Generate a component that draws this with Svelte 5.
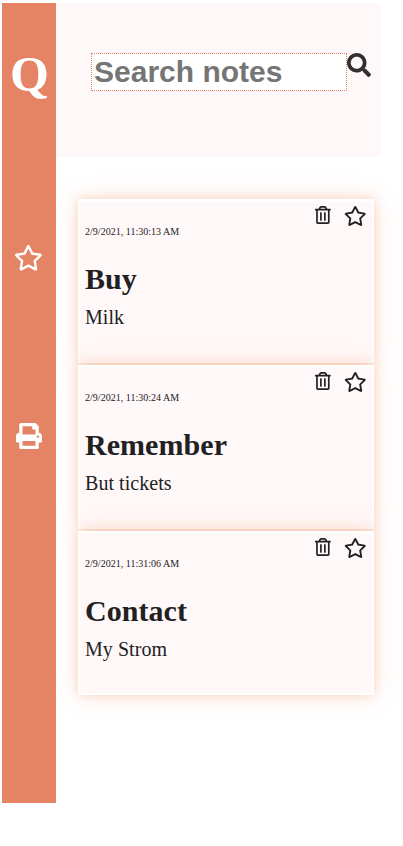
<script>
  const notes = [
    { date: '2/9/2021, 11:30:13 AM', title: 'Buy', body: 'Milk' },
    { date: '2/9/2021, 11:30:24 AM', title: 'Remember', body: 'But tickets' },
    { date: '2/9/2021, 11:31:06 AM', title: 'Contact', body: 'My Strom' }
  ];
</script>

{#snippet star(cls)}
  <svg class={cls} viewBox="0 0 576 512"><path fill="currentColor" d="M528.1 171.5L382 150.2 316.7 17.8c-11.7-23.6-45.6-23.9-57.4 0L194 150.2 47.9 171.5c-26.2 3.8-36.7 36.1-17.7 54.6l105.7 103-25 145.5c-4.5 26.3 23.2 46 46.4 33.7L288 439.6l130.7 68.7c23.2 12.2 50.9-7.4 46.4-33.7l-25-145.5 105.7-103c19-18.5 8.5-50.8-17.7-54.6zM388.6 312.3l23.7 138.4L288 385.4l-124.3 65.3 23.7-138.4-100.6-98 139-20.2 62.2-126 62.2 126 139 20.2-100.6 98z"/></svg>
{/snippet}

<div class="app">
  <aside>
    <div class="logo">Q</div>
    {@render star('side-star')}
    <svg class="print" viewBox="0 0 512 512"><path fill="currentColor" d="M448 192V77.25c0-8.49-3.37-16.62-9.37-22.63L393.37 9.37c-6-6-14.14-9.37-22.63-9.37H96C78.33 0 64 14.33 64 32v160c-35.35 0-64 28.65-64 64v112c0 8.84 7.16 16 16 16h48v96c0 17.67 14.33 32 32 32h320c17.67 0 32-14.33 32-32v-96h48c8.84 0 16-7.16 16-16V256c0-35.35-28.65-64-64-64zm-64 256H128v-96h256v96zm0-224H128V64h192v48c0 8.84 7.16 16 16 16h48v96zm48 72c-13.25 0-24-10.75-24-24 0-13.26 10.75-24 24-24s24 10.75 24 24c0 13.25-10.74 24-24 24z"/></svg>
  </aside>
  <div class="content">
    <header>
      <input type="text" placeholder="Search notes" />
      <svg class="search" viewBox="0 0 512 512"><path fill="currentColor" d="M505 442.7L405.3 343c-4.5-4.5-10.6-7-17-7H372c27.6-35.3 44-79.7 44-128C416 93.1 322.9 0 208 0S0 93.1 0 208s93.1 208 208 208c48.3 0 92.7-16.4 128-44v16.3c0 6.4 2.5 12.5 7 17l99.7 99.7c9.4 9.4 24.6 9.4 33.9 0l28.3-28.3c9.4-9.4 9.4-24.6.1-34zM208 336c-70.7 0-128-57.2-128-128 0-70.7 57.2-128 128-128 70.7 0 128 57.2 128 128 0 70.7-57.2 128-128 128z"/></svg>
    </header>
    <main>
      {#each notes as note}
        <article>
          <div class="actions">
            <svg class="trash" viewBox="0 0 448 512"><path fill="currentColor" d="M268 416h24a12 12 0 0 0 12-12V188a12 12 0 0 0-12-12h-24a12 12 0 0 0-12 12v216a12 12 0 0 0 12 12zM432 80h-82.41l-34-56.7A48 48 0 0 0 274.41 0H173.59a48 48 0 0 0-41.16 23.3L98.41 80H16A16 16 0 0 0 0 96v16a16 16 0 0 0 16 16h16v336a48 48 0 0 0 48 48h288a48 48 0 0 0 48-48V128h16a16 16 0 0 0 16-16V96a16 16 0 0 0-16-16zM171.84 50.91A6 6 0 0 1 177 48h94a6 6 0 0 1 5.15 2.91L293.61 80H154.39zM368 464H80V128h288zm-212-48h24a12 12 0 0 0 12-12V188a12 12 0 0 0-12-12h-24a12 12 0 0 0-12 12v216a12 12 0 0 0 12 12z"/></svg>
            {@render star('card-star')}
          </div>
          <time>{note.date}</time>
          <h2>{note.title}</h2>
          <p>{note.body}</p>
        </article>
      {/each}
    </main>
  </div>
</div>

<style>
  .app {
    display: flex;
    padding: 3px 0 0 2px;
    width: 403px;
    height: 846px;
    box-sizing: border-box;
    background: #fff;
    color: #212121;
    font-family: "Liberation Serif", "Times New Roman", serif;
  }
  svg { display: block; flex: none; }
  aside {
    width: 54px;
    height: 800px;
    flex: none;
    display: flex;
    flex-direction: column;
    align-items: center;
    background: #e58465;
    color: #fff;
  }
  .logo {
    margin-top: 43px;
    height: 57px;
    line-height: 57px;
    font-size: 50px;
    font-weight: 700;
    padding-left: 1px;
  }
  .side-star { width: 28.8px; height: 25.6px; margin: 142px 1px 0 0; }
  .print { width: 26px; height: 26px; margin-top: 152.4px; }
  .content { width: 325px; flex: none; }
  header {
    box-sizing: border-box;
    height: 154px;
    padding: 50px 0 0 35px;
    display: flex;
    align-items: flex-start;
    background: #fff8f8;
  }
  input {
    box-sizing: border-box;
    width: 256px;
    height: 38px;
    flex: none;
    margin: 0;
    padding: 1px 2px;
    border: 1px dotted #e58465;
    border-radius: 0;
    background: #fff;
    font: 700 30px "Liberation Sans", Arial, sans-serif;
  }
  input::placeholder { color: #757575; opacity: 1; }
  .search { width: 24px; height: 24px; color: #332f30; }
  main {
    display: flex;
    flex-direction: column;
    gap: 2px;
    padding: 42px 7px 0 22px;
  }
  article {
    box-sizing: border-box;
    position: relative;
    height: 164px;
    padding: 5px;
    border: 2px solid #fff;
    background: #fff8f8;
    box-shadow: 0 0 10px rgba(240, 140, 90, 0.3), 0 0 25px rgba(240, 140, 90, 0.2);
  }
  .actions {
    display: flex;
    justify-content: flex-end;
    gap: 13.5px;
    height: 20px;
    padding-right: 0.5px;
  }
  .trash { width: 15.75px; height: 18px; }
  .card-star { width: 22.5px; height: 20px; }
  time { display: block; font-size: 10px; line-height: 12px; letter-spacing: 0.02px; }
  h2 { margin: 24px 0 0; font-size: 30px; line-height: 34px; font-weight: 700; letter-spacing: 0.05px; }
  p { margin: 10px 0 0; font-size: 20px; line-height: 22px; letter-spacing: 0.05px; }
</style>
